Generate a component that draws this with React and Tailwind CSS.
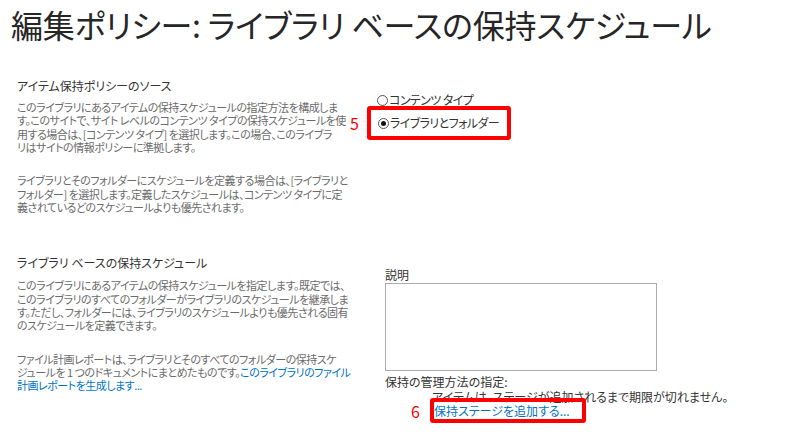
import React from "react";

const jp = "font-['Meiryo_UI','Noto_Sans_CJK_JP',sans-serif] [font-feature-settings:'palt']";

const Radio = ({ checked, label }) => (
  <div className="flex items-center gap-[1px]">
    <span className="w-[11px] h-[11px] rounded-full border border-[#555] bg-white flex items-center justify-center">
      {checked && <span className="w-[5px] h-[5px] rounded-full bg-[#111]" />}
    </span>
    <span className="text-[12px] leading-[14px] tracking-[-0.6px] text-[#333]">{label}</span>
  </div>
);

const Desc = ({ lines }) => (
  <p className="text-[11px] leading-[13.33px] tracking-[-0.5px] text-[#6b6b6b] whitespace-nowrap">
    {lines.map((l, i) => (
      <span key={i} className="block">
        {l}
      </span>
    ))}
  </p>
);

const App = () => {
  return (
    <div className={`w-[795px] h-[439px] bg-white overflow-hidden ${jp}`}>
      <h1 className="pl-[11px] pt-[5px] text-[32px] leading-[39px] tracking-[-0.2px] text-[#262626] whitespace-nowrap">
        編集ポリシー: ライブラリ ベースの保持スケジュール
      </h1>

      {/* section 1 */}
      <div className="flex mt-[35px]">
        <div className="w-[345px] pl-[17px]">
          <h2 className="text-[12px] leading-[14px] text-[#333]">アイテム保持ポリシーのソース</h2>
          <div className="mt-[8px]">
            <Desc
              lines={[
                "このライブラリにあるアイテムの保持スケジュールの指定方法を構成しま",
                "す。このサイトで、サイト レベルのコンテンツ タイプの保持スケジュールを使",
                "用する場合は、[コンテンツ タイプ] を選択します。この場合、このライブラ",
                "リはサイトの情報ポリシーに準拠します。",
              ]}
            />
          </div>
          <div className="mt-[20px]">
            <Desc
              lines={[
                "ライブラリとそのフォルダーにスケジュールを定義する場合は、[ライブラリと",
                "フォルダー] を選択します。定義したスケジュールは、コンテンツ タイプに定",
                "義されているどのスケジュールよりも優先されます。",
              ]}
            />
          </div>
        </div>
        <div className="flex-1 pt-[14px]">
          <div className="pl-[32px]">
            <Radio label="コンテンツ タイプ" />
          </div>
          <div className="flex items-center -mt-[1px]">
            <span className="w-[22px] pl-[5px] text-[16px] leading-[18px] text-[#f00]">5</span>
            <div className="border-[4px] border-[#f00] rounded-[3px] pl-[7px] pr-[8px] h-[34px] flex items-center">
              <Radio checked label="ライブラリとフォルダー" />
            </div>
          </div>
        </div>
      </div>

      {/* section 2 */}
      <div className="flex mt-[42px]">
        <div className="w-[345px] pl-[17px]">
          <h2 className="text-[12px] leading-[14px] text-[#333]">ライブラリ ベースの保持スケジュール</h2>
          <div className="mt-[9px]">
            <Desc
              lines={[
                "このライブラリにあるアイテムの保持スケジュールを指定します。既定では、",
                "このライブラリのすべてのフォルダーがライブラリのスケジュールを継承しま",
                "す。ただし、フォルダーには、ライブラリのスケジュールよりも優先される固有",
                "のスケジュールを定義できます。",
              ]}
            />
          </div>
          <div className="mt-[20px]">
            <p className="text-[11px] leading-[13.33px] tracking-[-0.5px] text-[#6b6b6b] whitespace-nowrap">
              <span className="block">ファイル計画レポートは、ライブラリとそのすべてのフォルダーの保持スケ</span>
              <span className="block">
                ジュールを 1 つのドキュメントにまとめたものです。
                <a className="text-[#0072c6]">このライブラリのファイル</a>
              </span>
              <span className="block text-[#0072c6]">計画レポートを生成します...</span>
            </p>
          </div>
        </div>
        <div className="flex-1 pl-[40px] pt-[12px]">
          <div className="text-[12px] leading-[14px] text-[#333]">説明</div>
          <div className="w-[272px] h-[88px] border border-[#ababab] mt-[1px]" />
          <div className="text-[12px] leading-[14px] text-[#333] mt-[4px]">保持の管理方法の指定:</div>
          <div className="text-[12px] leading-[14px] text-[#333] pl-[47px] mt-[1px] whitespace-nowrap">
            アイテムは、ステージが追加されるまで期限が切れません。
          </div>
          <div className="flex items-center -mt-[6px]">
            <span className="w-[45px] pl-[26px] text-[16px] leading-[18px] text-[#f00]">6</span>
            <div className="border-[4px] border-[#f00] rounded-[3px] pl-[0px] pr-[12px] h-[25px] flex items-center">
              <a className="text-[12px] leading-[14px] text-[#0072c6] whitespace-nowrap">保持ステージを追加する...</a>
            </div>
          </div>
        </div>
      </div>
    </div>
  );
};

export default App;
